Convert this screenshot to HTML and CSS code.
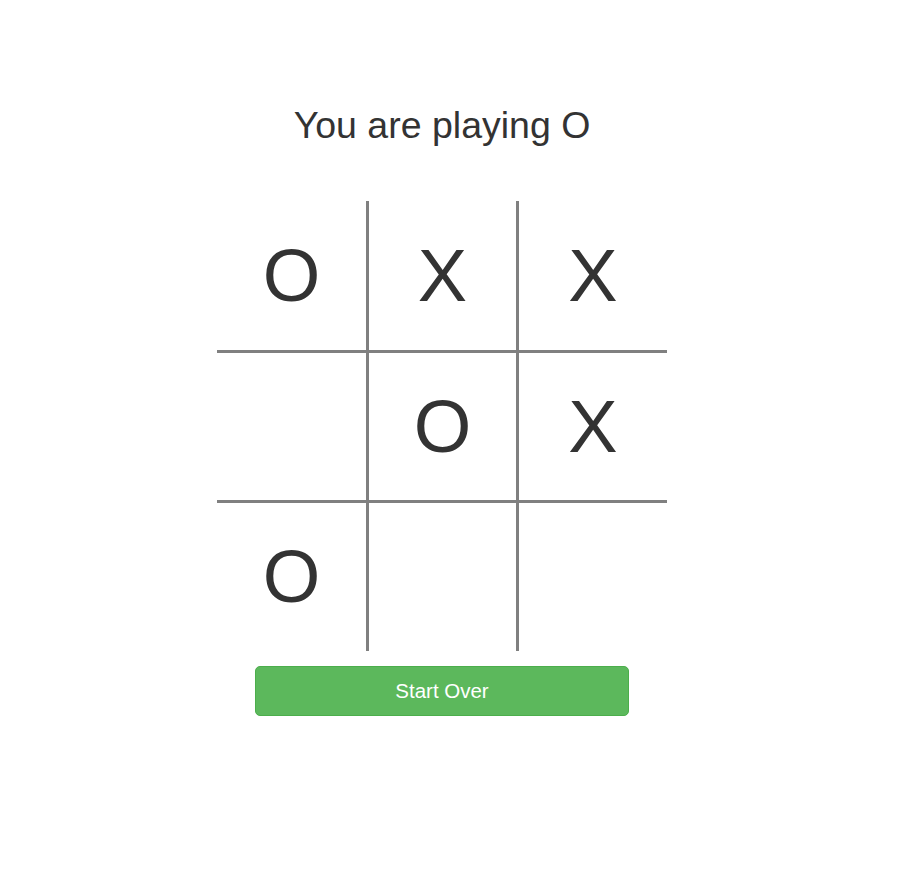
FILE: index.html
```html
<!DOCTYPE html>
<html lang="en">
<head>
<meta charset="utf-8">
<title>Tic Tac Toe</title>
<link rel="stylesheet" href="styles.css">
</head>
<body>
<main class="page">
  <h1 class="status">You are playing O</h1>
  <div class="board">
    <div class="cell">O</div>
    <div class="cell">X</div>
    <div class="cell">X</div>
    <div class="cell"></div>
    <div class="cell">O</div>
    <div class="cell">X</div>
    <div class="cell">O</div>
    <div class="cell"></div>
    <div class="cell"></div>
  </div>
  <button class="restart" type="button">Start Over</button>
</main>
</body>
</html>
```
FILE: styles.css
```css
html, body {
  margin: 0;
  padding: 0;
  background: #fff;
}
body {
  font-family: "Liberation Sans", Arial, Helvetica, sans-serif;
  color: #333;
}
.page {
  width: 884px;
  padding-top: 105px;
  display: flex;
  flex-direction: column;
  align-items: center;
}
.status {
  margin: 0;
  font-size: 37.5px;
  font-weight: 400;
  line-height: 40px;
  color: #333;
}
.board {
  margin-top: 56px;
  display: grid;
  grid-template-columns: 149px 147px 148px;
  grid-template-rows: 149px 147px 148px;
  gap: 3px;
  background: #808080;
}
.cell {
  background: #fff;
  display: flex;
  align-items: center;
  justify-content: center;
  font-size: 74px;
  line-height: 1;
  color: #333;
}
.restart {
  margin-top: 15px;
  width: 374px;
  height: 50px;
  background: #5cb85c;
  border: 1px solid #4cae4c;
  border-radius: 5px;
  color: #fff;
  font-family: "Liberation Sans", Arial, Helvetica, sans-serif;
  font-size: 20.5px;
  padding: 0;
  cursor: pointer;
}
```
